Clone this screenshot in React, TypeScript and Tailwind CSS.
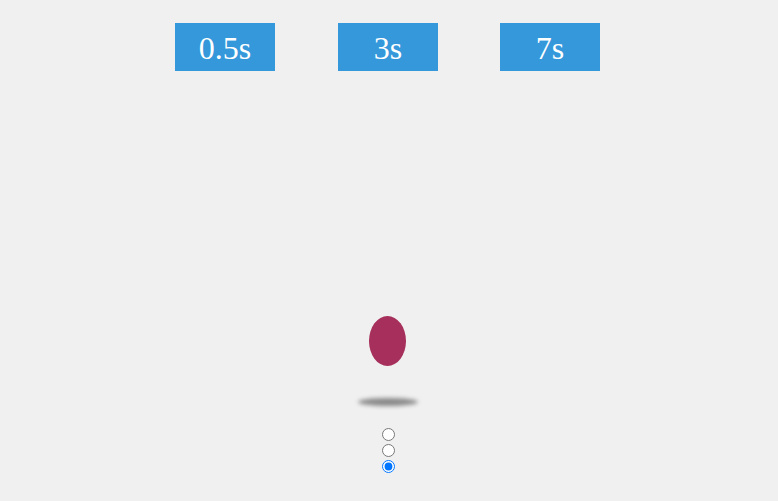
import React from "react";

export default function App() {
  return (
    <div className="w-[778px] h-[501px] bg-[#f0f0f0]">
      <div className="w-[776px] flex flex-col items-center" style={{ fontFamily: '"Liberation Serif", serif' }}>
        <div className="flex mt-[23px] w-[426px]">
          <div className="w-[100px] h-[48px] bg-[#3498db] text-white text-[32px] leading-[50px] text-center">0.5s</div>
          <div className="ml-[63px] w-[100px] h-[48px] bg-[#3498db] text-white text-[32px] leading-[50px] text-center">3s</div>
          <div className="ml-[62px] w-[100px] h-[48px] bg-[#3498db] text-white text-[32px] leading-[50px] text-center">7s</div>
        </div>
        <div className="mt-[245px] w-[37px] h-[50px] rounded-[50%] bg-[#a6305b] -translate-x-[1px]" />
        <div className="mt-[32px] w-[60px] h-[8px] rounded-[50%] bg-[#8a8a8a] blur-[2px]" />
        <div className="mt-[22px] flex flex-col items-center">
          <input type="radio" name="r" className="m-0 mb-[3px] w-[13px] h-[13px]" />
          <input type="radio" name="r" className="m-0 mb-[3px] w-[13px] h-[13px]" />
          <input type="radio" name="r" defaultChecked className="m-0 w-[13px] h-[13px]" />
        </div>
      </div>
    </div>
  );
}
